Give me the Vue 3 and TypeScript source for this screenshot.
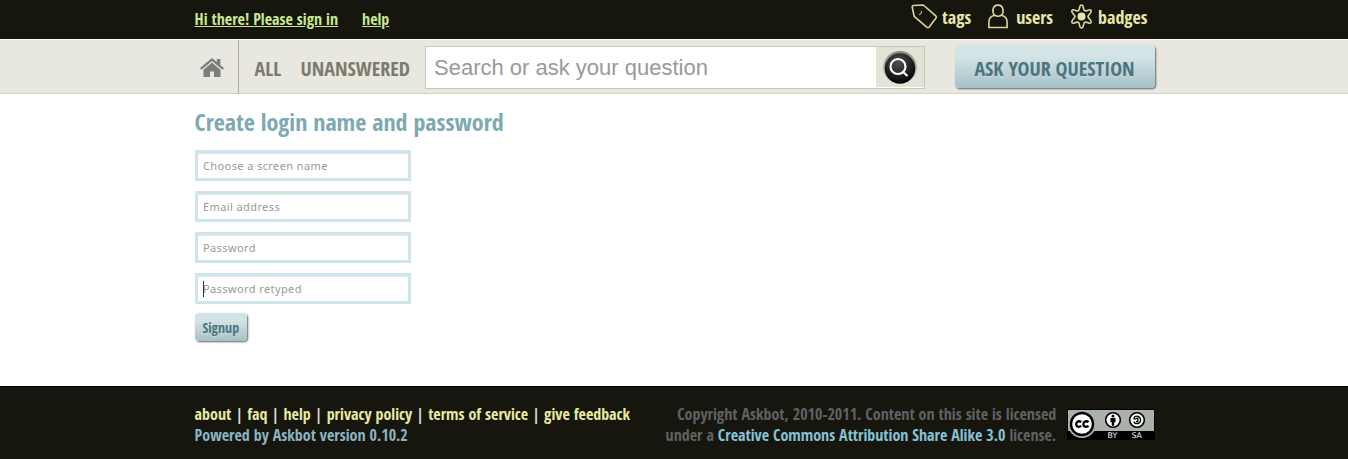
<script setup lang="ts">
import { ref } from 'vue'

interface Field {
  label: string
  type: string
}

const fields: Field[] = [
  { label: 'Choose a screen name', type: 'text' },
  { label: 'Email address', type: 'text' },
  { label: 'Password', type: 'password' },
  { label: 'Password retyped', type: 'password' },
]
const values = ref<string[]>(fields.map(() => ''))
const query = ref('')
const footerLinks: string[] = ['about', 'faq', 'help', 'privacy policy', 'terms of service', 'give feedback']
</script>

<template>
  <div class="page">
    <header class="topbar">
      <div class="wrap topbar-row">
        <nav class="account">
          <a href="#">Hi there! Please sign in</a>
          <a href="#">help</a>
        </nav>
        <nav class="sections">
          <a href="#" class="tags">
            <svg width="27" height="26" viewBox="0 0 27 26"><path d="M2.600 1.500 11.500 1Q12.500 1 13.500 2L25 12.200Q25.800 13 25 14L18 23.200Q17 24.300 16 23.300L4 13.200Q3.200 12.500 3 11.500L1.200 3Q1 1.700 2.600 1.500Z" /><path class="thin" d="M10.500 7q.5 3.300-2.500 3.600" /></svg>
            <span>tags</span>
          </a>
          <a href="#" class="users">
            <svg width="20" height="25" viewBox="0 0 20 25"><path d="M6.800 11.300C3.800 8.800 4 1.100 10 1.100s6.200 7.700 3.200 10.200q-3.200 2-6.400 0ZM6.800 11.300C2.500 12.200.9 15 .9 18v5.500h18.200V18c0-3-1.600-5.800-5.900-6.700" /></svg>
            <span>users</span>
          </a>
          <a href="#" class="badges">
            <svg width="23" height="25" viewBox="0 0 23 25"><path d="M8.300 6.800C10.300 5 8.900 1 11.500 1s1.200 4 3.200 5.800c2.600.8 5-2.600 6.300-.5s-2.500 3.700-3 6.200c.5 2.500 4.300 4.100 3 6.200s-3.700-1.300-6.300-.5c-2 1.800-.6 5.800-3.200 5.800s-1.200-4-3.200-5.800c-2.600-.8-5 2.600-6.300.5s2.500-3.700 3-6.200c-.5-2.500-4.300-4.100-3-6.200s3.700 1.300 6.300.5Z" /><circle class="dot" cx="11.500" cy="12.500" r="4" /></svg>
            <span>badges</span>
          </a>
        </nav>
      </div>
    </header>

    <div class="searchbar">
      <div class="wrap search-row">
        <a href="#" class="home" aria-label="home">
          <svg width="24" height="20" viewBox="0 0 24 20"><path d="M12 0 0 10l1.500 1.700L12 3l10.500 8.700L24 10l-3.700-3.100V1h-3.500v3ZM12 4.600 3.500 11.700V19H10v-5.500h4V19h6.500v-7.300Z" /></svg>
        </a>
        <a href="#" class="scope all">ALL</a>
        <a href="#" class="scope unanswered">UNANSWERED</a>
        <div class="search">
          <input v-model="query" placeholder="Search or ask your question" />
          <button class="go" aria-label="search">
            <svg width="36" height="36" viewBox="0 0 36 36">
              <defs>
                <radialGradient id="orb" cx=".45" cy=".3" r=".7"><stop offset="0" stop-color="#505050" /><stop offset="1" stop-color="#030303" /></radialGradient>
                <linearGradient id="rim" x1="0" y1="0" x2="0" y2="1"><stop offset="0" stop-color="#85867f" /><stop offset="1" stop-color="#e5e5dc" /></linearGradient>
              </defs>
              <circle cx="18" cy="17" r="17" fill="url(#rim)" />
              <circle cx="18" cy="17.500" r="15.300" fill="url(#orb)" />
              <circle cx="16" cy="15.500" r="7.500" class="lens" />
              <path d="m20.500 20.500 5 4.500" class="lens" />
            </svg>
          </button>
        </div>
        <button class="ask">ASK YOUR QUESTION</button>
      </div>
    </div>

    <main class="wrap content">
      <h1>Create login name and password</h1>
      <form @submit.prevent>
        <div v-for="(field, i) in fields" :key="field.label" class="field">
          <input v-model="values[i]" :type="field.type" :placeholder="field.label" />
          <i v-if="i === 3" class="caret"></i>
        </div>
        <button class="signup">Signup</button>
      </form>
    </main>

    <footer>
      <div class="wrap footer-row">
        <div class="links">
          <div><template v-for="(link, i) in footerLinks" :key="link"><span v-if="i" class="bar"> | </span><a href="#">{{ link }}</a></template></div>
          <div class="powered">Powered by Askbot version 0.10.2</div>
        </div>
        <div class="rights">
          <div>Copyright Askbot, 2010-2011. Content on this site is licensed</div>
          <div>under a <a href="#">Creative Commons Attribution Share Alike 3.0</a> license.</div>
        </div>
        <svg class="cc" width="88" height="31" viewBox="0 0 88 31">
          <rect width="88" height="31" rx="1" fill="#000" />
          <rect x="1" y="1" width="86" height="21" fill="#abb1aa" />
          <circle cx="15" cy="15" r="14" fill="#abb1aa" />
          <circle cx="15" cy="15" r="11" fill="#fff" stroke="#000" stroke-width="2.400" />
          <path d="M14.300 13.200q-1.700-1.500-3.600-.6c-2.200 1-1.900 4.600.3 5.100q1.900.4 3.300-1M21.500 13.200q-1.700-1.500-3.600-.6c-2.200 1-1.900 4.600.3 5.100q1.900.4 3.300-1" fill="none" stroke="#000" stroke-width="2.300" />
          <circle cx="46" cy="11" r="7.300" fill="#fff" stroke="#000" stroke-width="1.600" />
          <circle cx="46" cy="7.200" r="1.400" />
          <path d="M43.500 9h5v4.200h-1.300v3.600h-2.400v-3.600h-1.300Z" />
          <circle cx="70" cy="11" r="7.300" fill="#fff" stroke="#000" stroke-width="1.600" />
          <path d="M66.800 9.400c1-3.500 6.800-2.600 6.800 1.600s-5.800 4.900-6.800 1.500M66.300 9.800h2.700M69 9.300h1.800v3.200H69" fill="none" stroke="#000" stroke-width="1.300" />
          <text x="40.500" y="29.200">BY</text><text x="64.500" y="29.200">SA</text>
        </svg>
      </div>
    </footer>
  </div>
</template>

<style>
body { margin: 0; background: #fff; }
</style>

<style scoped>
* { box-sizing: border-box; }
.page { height: 459px; overflow: hidden; display: flex; flex-direction: column; font-family: "Open Sans Condensed", "Open Sans", sans-serif; font-stretch: 75%; font-weight: 700; white-space: nowrap; }
.wrap { width: 962px; margin-left: 194.600px; }
a { text-decoration: none; color: inherit; }
button { font: inherit; font-stretch: 75%; border: 0; padding: 0; }
.topbar { height: 39px; background: #16160f; }
.topbar-row { display: flex; justify-content: space-between; }
.account { display: flex; gap: 24px; padding-top: 8px; font-size: 16px; line-height: 22px; color: #c8e890; }
.account a { text-decoration: underline; }
.sections { display: flex; padding: 4px 9px 0 0; color: #e8e8a8; font-size: 18px; line-height: 26px; }
.sections a { display: flex; }
.sections svg { fill: none; stroke: #d8d898; stroke-width: 1.600; }
.sections .thin { stroke-width: 1; }
.sections .dot { fill: #e4e6ae; stroke: none; }
.tags span { margin-left: 4px; }
.users { margin-left: 17px; }
.users span { margin-left: 8px; }
.badges { margin-left: 17px; }
.badges span { margin-left: 5px; }
.searchbar { height: 55px; background: #e9e8e0; border-top: 1px solid #fff; border-bottom: 1px solid #d3d3c2; }
.search-row { display: flex; height: 54px; width: 962px; margin-left: 194px; }
.home { width: 45px; border-right: 1px solid #b1b19a; padding: 18px 0 0 6px; }
.home svg { fill: #7c7c7c; display: block; }
.scope { color: #7c7b6b; font-size: 20px; line-height: 58px; }
.all { margin-left: 15.600px; width: 46px; }
.unanswered { width: 124.400px; }
.search { display: flex; width: 500px; height: 43px; margin-top: 6px; background: #fff; border: 1px solid #c9c9b0; }
.search input { width: 450px; border: 0; outline: 0; padding: 0 8px; font: 22px "Liberation Sans", Arial, sans-serif; }
.search input::placeholder, .field input::placeholder { color: #999; opacity: 1; }
.go { width: 48px; height: 40px; margin-left: 1px; background: #e3e3d8; padding: 3px 0 0 6px; }
.go svg { display: block; }
.lens { fill: none; stroke: #fff; stroke-width: 2.200; }
.ask { width: 200px; height: 43px; margin: 5px 0 0 30px; font-size: 20px; padding: 2px 1px 0 0; }
.ask, .signup { color: #4a757f; background: linear-gradient(#d3e4e7 25%, #a7c1c6); border-radius: 4px; border-top: 1px solid #d9e7e9; box-shadow: 1px 1px 2px #636363; text-shadow: 0 1px #c6d9dd; }
.content { height: 292px; }
h1 { margin: 10px 0; font-size: 24px; line-height: 36px; color: #7ea9b3; }
.field { position: relative; width: 216px; height: 31px; margin-bottom: 10px; }
.field input { width: 216px; height: 31px; border: 3px solid #cce6ec; padding: 0 5.400px; outline: 0; box-shadow: inset 0 1px 1px #e5e5e5; font: 11px "Noto Sans", sans-serif; letter-spacing: .4px; display: block; }
.caret { position: absolute; left: 8px; top: 8px; width: 1px; height: 16px; background: #333; }
.signup { width: 52.400px; height: 28px; margin-top: -1px; font-size: 14px; display: block; padding-bottom: 1px; }
footer { height: 73px; background: #16160f; border-top: 1px solid #000; font-size: 16px; line-height: 21px; }
.footer-row { display: flex; padding-top: 17px; }
.links { width: 440px; color: #e8eaa0; }
.bar { color: #ddd; white-space: pre; }
.powered { color: #8bb4c2; }
.rights { width: 421.600px; text-align: right; color: #616161; }
.rights a { color: #87c2d5; }
.cc { margin: 5px 0 0 10.800px; flex: none; }
.cc text { fill: #fff; font: 7.800px "DejaVu Sans", sans-serif; }
</style>
